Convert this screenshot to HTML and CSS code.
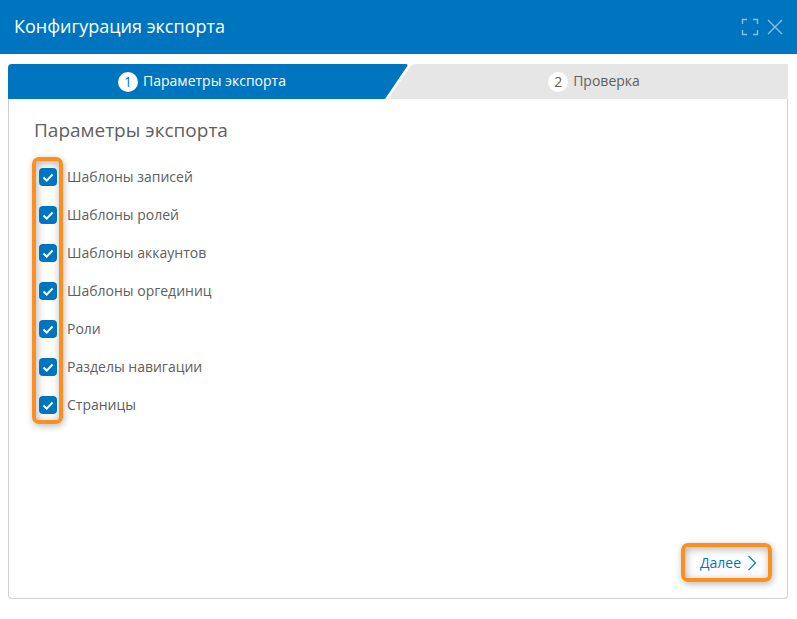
FILE: index.html
```html
<!DOCTYPE html>
<html lang="ru">
<head>
<meta charset="utf-8">
<title>Конфигурация экспорта</title>
<link rel="stylesheet" href="styles.css">
</head>
<body>
<div class="dialog">
  <header class="titlebar">
    <h1>Конфигурация экспорта</h1>
    <div class="tools">
      <svg width="18" height="18" viewBox="0 0 18 18"><path d="M1.500 6V1.500H6M12 1.500H16.500V6M16.500 12V16.500H12M6 16.500H1.500V12"/></svg>
      <svg class="close" width="16" height="16" viewBox="0 0 16 16"><path d="M1 1L15 15M15 1L1 15"/></svg>
    </div>
  </header>
  <main class="wizard">
    <nav class="steps">
      <svg class="shape" width="780" height="35" viewBox="0 0 780 35">
        <path fill="#0075bf" d="M0 35V4Q0 0 4 0H397.500Q400.500 0 399 2.500L377 35Z"/>
        <path fill="#e6e6e6" d="M380 35L401.500 3.500Q404 0 408 0H780V35Z"/>
      </svg>
      <div class="step active"><span class="num">1</span><span class="name">Параметры экспорта</span></div>
      <div class="step"><span class="num">2</span><span class="name">Проверка</span></div>
    </nav>
    <section class="panel">
      <h2>Параметры экспорта</h2>
      <ul class="options">
        <li><span class="check"><svg width="18" height="18" viewBox="0 0 18 18"><path d="M4.500 9.600L7.700 12.600L13.600 6.500"/></svg></span>Шаблоны записей</li>
        <li><span class="check"><svg width="18" height="18" viewBox="0 0 18 18"><path d="M4.500 9.600L7.700 12.600L13.600 6.500"/></svg></span>Шаблоны ролей</li>
        <li><span class="check"><svg width="18" height="18" viewBox="0 0 18 18"><path d="M4.500 9.600L7.700 12.600L13.600 6.500"/></svg></span>Шаблоны аккаунтов</li>
        <li><span class="check"><svg width="18" height="18" viewBox="0 0 18 18"><path d="M4.500 9.600L7.700 12.600L13.600 6.500"/></svg></span>Шаблоны оргединиц</li>
        <li><span class="check"><svg width="18" height="18" viewBox="0 0 18 18"><path d="M4.500 9.600L7.700 12.600L13.600 6.500"/></svg></span>Роли</li>
        <li><span class="check"><svg width="18" height="18" viewBox="0 0 18 18"><path d="M4.500 9.600L7.700 12.600L13.600 6.500"/></svg></span>Разделы навигации</li>
        <li><span class="check"><svg width="18" height="18" viewBox="0 0 18 18"><path d="M4.500 9.600L7.700 12.600L13.600 6.500"/></svg></span>Страницы</li>
      </ul>
      <footer class="actions">
        <div class="next highlight">Далее<svg width="10" height="16" viewBox="0 0 10 16"><path d="M1.500 .800L8.500 8L1.500 15.200"/></svg></div>
      </footer>
    </section>
  </main>
</div>
</body>
</html>
```

FILE: styles.css
```css
*, *::before { box-sizing: border-box; }
body { margin: 0; background: #fff; font: 14px/20px "Open Sans", "Noto Sans", sans-serif; color: #606060; }
h1, h2, ul { margin: 0; padding: 0; font-weight: 400; }
svg { display: block; fill: none; }
.dialog { height: 619px; display: flex; flex-direction: column; overflow: hidden; }
.titlebar { height: 54px; flex: none; padding: 0 14px; display: flex; align-items: center; justify-content: space-between; background: #0075bf; color: #fff; }
h1 { font-size: 18px; line-height: 24px; padding-bottom: 2px; }
.tools { display: flex; align-items: center; gap: 8px; stroke: #8abfe2; stroke-width: 1.400; }
.wizard { flex: 1; padding: 10px 9px 20px 8px; display: flex; flex-direction: column; }
.steps { position: relative; height: 35px; flex: none; display: flex; }
.shape { position: absolute; left: 0; top: 0; }
.step { position: relative; width: 388px; display: flex; align-items: center; justify-content: center; gap: 5px; }
.step + .step { width: 392px; padding-left: 4px; }
.active { color: #fff; }
.name { margin-top: -1px; }
.num { width: 20px; height: 20px; border-radius: 50%; background: #fff; text-align: center; line-height: 20px; margin-top: 1px; }
.active .num { color: #0075bf; }
.panel { flex: 1; display: flex; flex-direction: column; border: 1px solid #d2d2d2; border-top: 0; border-radius: 0 0 4px 4px; padding: 17px 15px 16px 23px; }
h2 { font-size: 19px; line-height: 28px; padding-left: 2px; }
.highlight, .options::before { border: 4px solid #fc8f20; border-radius: 7px; box-shadow: 1px 2px 7px rgba(0,0,0,.28), inset 1px 2px 9px rgba(0,0,0,.3); }
.options { position: relative; list-style: none; margin-top: 14px; padding: 0 0 0 7px; }
.options::before { content: ""; position: absolute; left: 0; top: -1px; width: 31px; height: 267px; }
.options li { position: relative; height: 38px; display: flex; align-items: center; gap: 10px; }
.check { width: 18px; height: 18px; border-radius: 4px; background: #0075bf; stroke: #fff; stroke-width: 2; }
.actions { margin-top: auto; display: flex; justify-content: flex-end; }
.next { width: 91px; height: 39px; padding-left: 4px; display: flex; align-items: center; justify-content: center; gap: 6px; color: #0075bf; stroke: #0075bf; stroke-width: 1.200; }
```
